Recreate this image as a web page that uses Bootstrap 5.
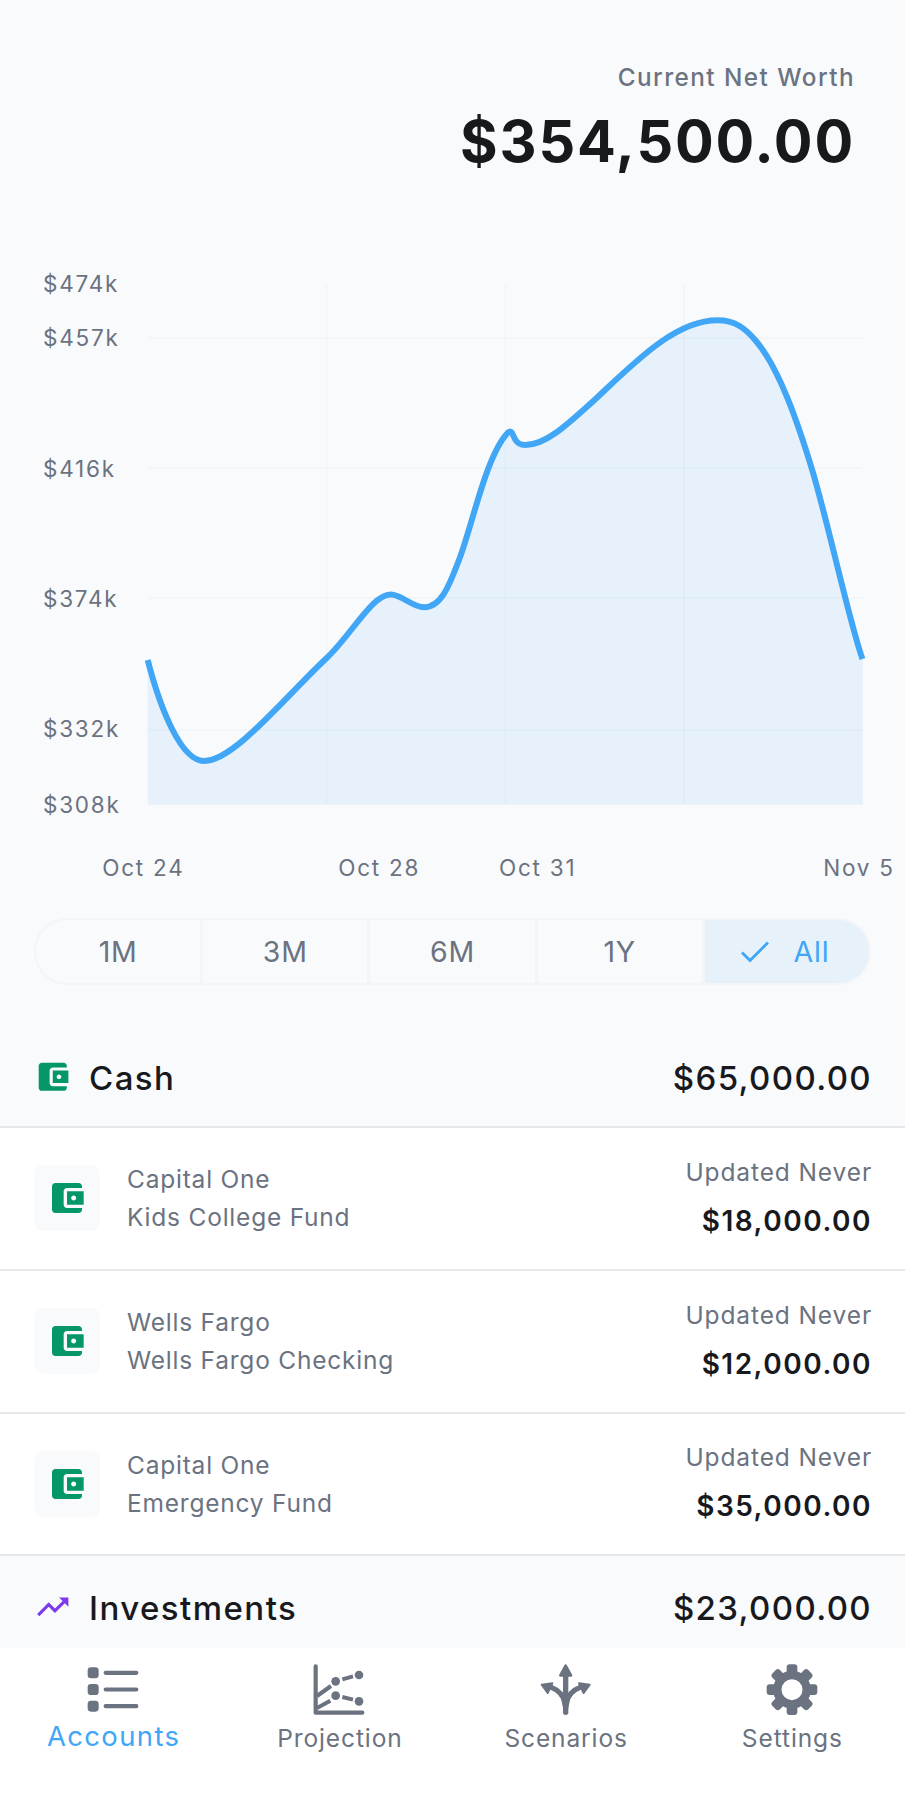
<!DOCTYPE html>
<html lang="en">
<head>
<meta charset="utf-8">
<meta name="viewport" content="width=device-width, initial-scale=1">
<title>Accounts</title>
<link href="https://cdn.jsdelivr.net/npm/bootstrap@5.3.0/dist/css/bootstrap.min.css" rel="stylesheet">
<style>
  :root { --page: #f9fafc; --muted: #6b7280; --ink: #18191c; --line: #e6e8eb; --faint: #f3f5f7; --accent: #40a6f5; --accent-soft: #e6f1fa; }
  body { background: #fff; color: var(--ink); font-family: Inter, "Liberation Sans", sans-serif; }
  .app { height: 1799px; overflow: hidden; }
  .screen { background: var(--page); height: 1648px; overflow: hidden; }
  .muted { color: var(--muted); }

  .worth { height: 260px; padding: 60px 50px 0 0; }
  .worth-label { font-size: 24.3px; font-weight: 500; letter-spacing: 1.45px; line-height: 35px; }
  .worth-total { font-size: 57.5px; font-weight: 700; letter-spacing: 1.82px; line-height: 93px; }

  .chart { height: 658px; }
  .chart text { font-size: 22.5px; fill: var(--muted); letter-spacing: 1.75px; }
  .grid-lines { stroke: #f3f5f7; stroke-width: 2; }
  .series { stroke: #40a6f5; stroke-width: 6; fill: none; }

  .ranges { height: 67px; margin: 0 34px; }
  .ranges .btn { --bs-btn-border-color: var(--faint); --bs-btn-border-width: 2px; --bs-btn-color: var(--muted);
    --bs-btn-active-color: var(--accent); --bs-btn-active-bg: var(--accent-soft); --bs-btn-active-border-color: var(--faint);
    --bs-btn-font-size: 28.5px; --bs-btn-padding-x: 0; --bs-btn-padding-y: 0;
    flex: 1 1 0; width: 0; letter-spacing: .8px; line-height: 64px; }
  .ranges .btn svg { margin: 0 24px 0 -3px; }

  .section-head { height: 104px; padding: 1px 33px 0 34px; border-bottom: 2px solid var(--line); font-size: 33px; font-weight: 500; line-height: 40px; }
  .section-head svg { width: 37.5px; height: 37.5px; margin: -2px 17.5px 0 0; }
  .section-head .amount { letter-spacing: 1.36px; }
  .section-head .title { letter-spacing: 1.45px; }
  .section-cash { height: 101px; margin-top: 42px; padding-top: 3px; }
  .cash { color: #059669; }
  .invest { color: #7c3aed; }

  .accounts .list-group-item { height: 142.75px; padding: 0 33px 0 34px; border: 0; border-bottom: 2px solid var(--line) !important; background: #fff; }
  .thumb { width: 66px; height: 66px; border-radius: 9px; background: var(--page); margin-right: 27px; }
  .thumb svg { width: 40px; height: 40px; }
  .names { font-size: 24.5px; letter-spacing: .78px; line-height: 38px; }
  .updated { font-size: 24.5px; letter-spacing: .89px; line-height: 45px; }
  .balance { font-size: 28px; font-weight: 600; letter-spacing: 1.5px; line-height: 52px; color: var(--ink); }

  .tabs { height: 151px; background: #fff; }
  .tabs .nav-link { color: var(--muted); padding: 16px 0 0; font-size: 24.5px; letter-spacing: .9px; line-height: 30px; }
  .tabs .nav-link svg { display: block; width: 52px; height: 52px; margin: 0 auto 7px; }
  .tabs .caption { padding-left: 1px; }
  .tabs .nav-link.active .caption { color: var(--accent); font-size: 27.5px; letter-spacing: 1.35px; position: relative; top: -2px; }
</style>
</head>
<body>
<svg class="d-none">
  <symbol id="wallet" viewBox="0 0 24 24"><path fill="currentColor" d="M21 18v1c0 1.1-.9 2-2 2H5c-1.11 0-2-.9-2-2V5c0-1.1.89-2 2-2h14c1.1 0 2 .9 2 2v1h-9c-1.11 0-2 .9-2 2v8c0 1.1.89 2 2 2h9zm-9-2h10V8H12v8zm4-2.5c-.83 0-1.5-.67-1.5-1.5s.67-1.5 1.5-1.5 1.5.67 1.5 1.5-.67 1.5-1.5 1.5z"/></symbol>
  <symbol id="trend" viewBox="0 0 24 24"><path fill="currentColor" d="M16 6l2.29 2.29-4.88 4.88-4-4L2 16.59 3.41 18l6-6 4 4 6.3-6.29L22 12V6z"/></symbol>
</svg>
<div class="app d-flex flex-column">
  <main class="screen">
    <header class="worth text-end">
      <div class="worth-label muted">Current Net Worth</div>
      <div class="worth-total">$354,500.00</div>
    </header>

    <svg class="chart d-block w-100" viewBox="0 260 905 658" role="img" aria-label="Net worth over time">
      <g class="grid-lines">
        <path d="M148 338H862M148 468H862M148 598H862M148 730H862M326.5 284V804M505.5 284V804M684 284V804"/>
      </g>
      <path fill="#40a6f5" fill-opacity=".1" d="M147.7 660C160 708 181 761 204 761C234 761 284 698 326.7 658C352 634 372 594.5 390.7 594.5C402 594.5 412 607.3 424 607.3C442 607.3 450 583 459 560C472 527 486 455 508 432.5C512 429 513 436 515.5 440C518 444 522 445 525 445C545 445 565 427 598 396.7C636 361 676 320.3 717.3 320.3C735 320.3 745 328 756 341C780 369 799 427 811.7 468.3C827 518 850 625 862.8 659V804.7H147.7Z"/>
      <path class="series" d="M147.7 660C160 708 181 761 204 761C234 761 284 698 326.7 658C352 634 372 594.5 390.7 594.5C402 594.5 412 607.3 424 607.3C442 607.3 450 583 459 560C472 527 486 455 508 432.5C512 429 513 436 515.5 440C518 444 522 445 525 445C545 445 565 427 598 396.7C636 361 676 320.3 717.3 320.3C735 320.3 745 328 756 341C780 369 799 427 811.7 468.3C827 518 850 625 862.5 659"/>
      <g>
        <text x="43" y="292.3">$474k</text>
        <text x="43" y="346.3">$457k</text>
        <text x="43" y="476.7">$416k</text>
        <text x="43" y="606.5">$374k</text>
        <text x="43" y="736.7">$332k</text>
        <text x="43" y="813">$308k</text>
      </g>
      <g>
        <text x="102.3" y="876">Oct 24</text>
        <text x="338.3" y="876">Oct 28</text>
        <text x="499" y="876">Oct 31</text>
        <text x="823.2" y="876">Nov 5</text>
      </g>
    </svg>

    <div class="ranges btn-group d-flex" role="group" aria-label="Range">
      <button type="button" class="btn rounded-start-pill">1M</button>
      <button type="button" class="btn">3M</button>
      <button type="button" class="btn">6M</button>
      <button type="button" class="btn">1Y</button>
      <button type="button" class="btn active rounded-end-pill d-flex align-items-center justify-content-center">
        <svg width="28" height="22" viewBox="0 0 28 22" fill="none" stroke="currentColor" stroke-width="2.8"><path d="M1 11.5l8 8L27 1.5"/></svg>All
      </button>
    </div>

    <section>
      <div class="section-head section-cash d-flex align-items-center">
        <svg class="cash"><use href="#wallet"/></svg>
        <span class="title">Cash</span><span class="amount ms-auto">$65,000.00</span>
      </div>
      <div class="accounts list-group list-group-flush">
        <div class="list-group-item d-flex align-items-center">
          <div class="thumb cash d-flex align-items-center justify-content-center"><svg><use href="#wallet"/></svg></div>
          <div class="names muted"><div>Capital One</div><div>Kids College Fund</div></div>
          <div class="ms-auto text-end"><div class="updated muted">Updated Never</div><div class="balance">$18,000.00</div></div>
        </div>
        <div class="list-group-item d-flex align-items-center">
          <div class="thumb cash d-flex align-items-center justify-content-center"><svg><use href="#wallet"/></svg></div>
          <div class="names muted"><div>Wells Fargo</div><div>Wells Fargo Checking</div></div>
          <div class="ms-auto text-end"><div class="updated muted">Updated Never</div><div class="balance">$12,000.00</div></div>
        </div>
        <div class="list-group-item d-flex align-items-center">
          <div class="thumb cash d-flex align-items-center justify-content-center"><svg><use href="#wallet"/></svg></div>
          <div class="names muted"><div>Capital One</div><div>Emergency Fund</div></div>
          <div class="ms-auto text-end"><div class="updated muted">Updated Never</div><div class="balance">$35,000.00</div></div>
        </div>
      </div>
    </section>

    <section>
      <div class="section-head d-flex align-items-center">
        <svg class="invest"><use href="#trend"/></svg>
        <span class="title">Investments</span><span class="amount ms-auto">$23,000.00</span>
      </div>
    </section>
  </main>

  <nav class="tabs nav nav-fill flex-nowrap align-items-start">
    <a class="nav-link active col-3" href="#">
      <svg viewBox="0 0 156 156" fill="currentColor"><g><rect x="2" y="10" width="33" height="33" rx="10"/><rect x="2" y="60" width="33" height="33" rx="10"/><rect x="2" y="110" width="33" height="33" rx="10"/></g><path d="M56 26.5H148M56 76.5H148M56 126.5H148" stroke="currentColor" stroke-width="12.5" stroke-linecap="round"/></svg>
      <div class="caption">Accounts</div>
    </a>
    <a class="nav-link col-3" href="#">
      <svg viewBox="0 0 156 156" fill="none" stroke="currentColor" stroke-width="12"><path d="M8 7V146H148" stroke-width="12.5" stroke-linecap="round" stroke-linejoin="round"/><path d="M12 96L54 66M88 46L120 37M12 132L52 110M88 99L120 107"/><g fill="currentColor" stroke="none"><circle cx="68" cy="52" r="13"/><circle cx="138" cy="33" r="13"/><circle cx="68" cy="95" r="13"/><circle cx="138" cy="112" r="13"/></g></svg>
      <div class="caption">Projection</div>
    </a>
    <a class="nav-link col-3" href="#">
      <svg viewBox="0 0 156 156" fill="currentColor" stroke="currentColor" stroke-linejoin="round" stroke-linecap="round"><path d="M77 5L93 34H61Z" stroke-width="8"/><path d="M5 62L37 58L23 87ZM149 62L117 58L131 87Z" stroke-width="6"/><path d="M77 35V145" stroke-width="16"/><path d="M34 70Q66 82 77 118Q88 82 120 70" fill="none" stroke-width="15"/><path d="M65 98L89 98L79 146H75Z" stroke-width="6"/></svg>
      <div class="caption">Scenarios</div>
    </a>
    <a class="nav-link col-3" href="#">
      <svg viewBox="0 0 156 156" fill="currentColor"><circle cx="78" cy="77" r="44" fill="none" stroke="currentColor" stroke-width="25"/><g id="teeth"><rect x="62" y="1" width="32" height="30" rx="9"/><rect x="62" y="123" width="32" height="30" rx="9"/><rect x="2" y="61" width="30" height="32" rx="9"/><rect x="124" y="61" width="30" height="32" rx="9"/></g><use href="#teeth" transform="rotate(45 78 77)"/></svg>
      <div class="caption">Settings</div>
    </a>
  </nav>
</div>
<script src="https://cdn.jsdelivr.net/npm/bootstrap@5.3.0/dist/js/bootstrap.bundle.min.js"></script>
</body>
</html>
